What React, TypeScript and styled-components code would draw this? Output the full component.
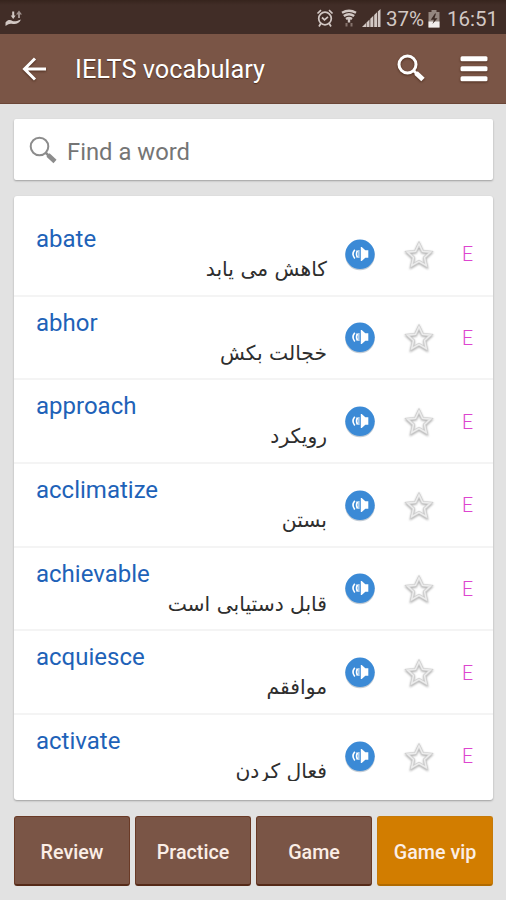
import styled, { createGlobalStyle } from 'styled-components';

const GlobalStyle = createGlobalStyle`
  * {
    box-sizing: border-box;
  }

  body {
    margin: 0;
    background-color: #e2e2e2;
    font-family: Roboto, 'DejaVu Sans', sans-serif;
  }

  svg {
    display: block;
    flex-shrink: 0;
  }
`

const Screen = styled.div`
  display: flex;
  flex-direction: column;
  width: 506px;
  height: 900px;
  overflow: hidden;
  background-color: #e2e2e2;
`

const StatusBar = styled.div`
  display: flex;
  justify-content: space-between;
  align-items: center;
  height: 34px;
  padding: 3px 9px 0 4px;
  background: linear-gradient(#36241d, #412d27 5px);
  color: #d2c8c4;
`

const StatusIcons = styled.div`
  display: flex;
  align-items: center;
`

const Gap = styled.div<{ $width: number }>`
  width: ${({ $width }) => $width}px;
`

const StatusText = styled.span<{ $width: number; $left: number }>`
  width: ${({ $width }) => $width}px;
  margin-left: ${({ $left }) => $left}px;
  font-size: 20.5px;
  line-height: 30px;
  white-space: nowrap;
`

const AppBar = styled.header`
  display: flex;
  align-items: center;
  height: 70px;
  padding: 0 18px 0 22px;
  background-color: #7a5546;
  border-bottom: 1px solid #6b4637;
  color: #ffffff;

  svg {
    filter: drop-shadow(0 1px 1px rgba(50, 20, 5, 0.6));
  }
`

const Title = styled.h1`
  flex: 1;
  margin: 3px 0 0 28px;
  font-size: 25.3px;
  font-weight: 400;
  line-height: 32px;
  text-shadow: 0 1px 1px rgba(50, 20, 5, 0.6);
`

const SearchButton = styled.div`
  margin-bottom: 2px;
`

const MenuButton = styled.div`
  margin: 1px 0 0 35px;
`

const SearchBox = styled.div`
  display: flex;
  align-items: center;
  height: 61px;
  margin: 15px 13px 0 14px;
  padding: 1px 14px 0 15px;
  background-color: #ffffff;
  border-radius: 2px;
  box-shadow: 0 1px 2px rgba(0, 0, 0, 0.3);
  color: #757575;
  font-size: 23.8px;
`

const Placeholder = styled.span`
  margin: 3px 0 0 10px;
`

const ListCard = styled.div`
  height: 604px;
  margin: 16px 13px 0 14px;
  padding: 17px 0 19px;
  background-color: #ffffff;
  border-radius: 3px;
  box-shadow: 0 1px 2px rgba(0, 0, 0, 0.3);
`

const List = styled.div`
  height: 568px;
  overflow: hidden;
`

const Row = styled.div`
  display: flex;
  align-items: center;
  height: 83.65px;
  padding-right: 20px;
  border-bottom: 2px solid #f4f4f4;
`

const Texts = styled.div`
  display: flex;
  flex-direction: column;
  width: 313px;
  height: 100%;
  padding: 10px 0 0 22px;
`

const Word = styled.span`
  color: #1e62b8;
  font-size: 24px;
  line-height: 32px;
`

const Translation = styled.span`
  color: #2e2e2e;
  font-family: 'DejaVu Sans', sans-serif;
  font-size: 20.3px;
  line-height: 28px;
  white-space: nowrap;
`

const SpeakButton = styled.div`
  margin-left: 17px;
`

const StarButton = styled.div`
  margin: 2px 0 0 27px;

  svg {
    filter: drop-shadow(0 1px 1px rgba(0, 0, 0, 0.35));
  }
`

const Badge = styled.span`
  margin: 3px 0 0 auto;
  color: #dd45cf;
  font-size: 19.5px;
  line-height: 24px;
  font-weight: 300;
`

const Actions = styled.div`
  display: grid;
  grid-template-columns: repeat(4, 1fr);
  gap: 5px;
  margin: 16px 13px 0 14px;
`

const ActionButton = styled.button<{ $vip?: boolean }>`
  height: 70px;
  padding: 3px 0 0;
  border: 1px solid ${({ $vip }) => ($vip ? '#c67a08' : '#6a3a26')};
  border-bottom: 2px solid ${({ $vip }) => ($vip ? '#b06a00' : '#552a18')};
  border-radius: 3px;
  background-color: ${({ $vip }) => ($vip ? '#d27d00' : '#7a5546')};
  color: #fbeee6;
  font-family: Roboto, sans-serif;
  font-size: 19.7px;
  font-weight: 500;
  white-space: nowrap;
`

const words = [
  { word: 'abate', translation: 'کاهش می یابد' },
  { word: 'abhor', translation: 'خجالت بکش' },
  { word: 'approach', translation: 'رویکرد' },
  { word: 'acclimatize', translation: 'بستن' },
  { word: 'achievable', translation: 'قابل دستیابی است' },
  { word: 'acquiesce', translation: 'موافقم' },
  { word: 'activate', translation: 'فعال کردن' },
]

const ShareIcon = () => (
  <svg width="20" height="20" viewBox="0 0 20 20" fill="#d2c8c4">
    <path d="M1.500 13.500c3-3.500 5-2.500 7-1.500 2 .8 4 .3 8.500-1.500-2 4-5 5-8 4.500-3-.7-4-.5-7.500 2z" />
    <path d="M8.200 2.500h2v4h1.500l-2.500 3.500-2.500-3.500h1.500z" />
    <path d="M14 9V5.500h-2L15 1.500l3 4h-2V9z" opacity="0.65" />
  </svg>
)

const AlarmIcon = () => (
  <svg width="18" height="20" viewBox="0 0 18 20" fill="none" stroke="#d2c8c4" strokeWidth="1.700">
    <circle cx="9" cy="9.500" r="6.300" />
    <path d="M1.500 4.500 5 1.200M16.500 4.500 13 1.200M4.800 14.500 3 17.500M13.200 14.500 15 17.500M6 8.500l2.500 2.300 3.500-3" />
  </svg>
)

const WifiIcon = () => (
  <svg width="16" height="20" viewBox="0 0 16 20" fill="none" stroke="#d2c8c4" strokeWidth="2.400">
    <path d="M1 3.800q7-4 14 0M2.800 7q5.200-3.500 10.400 0M5 10q3-2 6 0" />
    <path d="M8 10v3.500" />
    <path d="M5.500 14v3.500M10.500 14v3.500" stroke="#85736c" strokeWidth="2" />
  </svg>
)

const SignalIcon = () => (
  <svg width="19" height="19" viewBox="0 0 19 19" fill="#d2c8c4">
    <path d="M0 18l4-4v4zM4.500 13.500l3-3V18h-3zM8.300 9.700l3-3V18h-3zM12.200 6l2.800-2.800V18h-2.800zM15.800 2.500 18.500 0v18h-2.700z" />
  </svg>
)

const BatteryIcon = () => (
  <svg width="12" height="18" viewBox="0 0 12 18">
    <path d="M3.500 0h5v2H11.500v15.500h-11V2h3z" fill="#93867f" />
    <path d="M.5 11.500h11v6H.5z" fill="#f1eeec" />
    <path d="M7 3.500 2.800 9.800H6L4.500 14l5-5.700H6.500L8 3.500z" fill="#3b2a24" />
  </svg>
)

const BackIcon = () => (
  <svg width="25" height="24" viewBox="0 0 25 24" fill="none" stroke="currentColor" strokeWidth="3">
    <path d="M24 12H3M13 1.500 2.500 12 13 22.500" />
  </svg>
)

const SearchIcon = ({ thin }: { thin?: boolean }) => (
  <svg width="28" height="28" viewBox="0 0 28 28" fill="none" stroke={thin ? '#8c8c8c' : '#ffffff'}>
    <circle cx="10.500" cy="10.500" r={thin ? 8.800 : 8.500} strokeWidth={thin ? 2 : 3} />
    <path d="M16.500 16.500 20 20" strokeWidth={thin ? 2.500 : 3} />
    <path d="M19 19l7 6.500" strokeWidth={thin ? 4.500 : 5} />
  </svg>
)

const MenuIcon = () => (
  <svg width="28" height="26" viewBox="0 0 28 26" fill="currentColor">
    <rect x="0.500" y="0.300" width="27" height="5" rx="1.500" />
    <rect x="0.500" y="10.300" width="27" height="5" rx="1.500" />
    <rect x="0.500" y="20.300" width="27" height="5" rx="1.500" />
  </svg>
)

const SpeakerIcon = () => (
  <svg width="32" height="34" viewBox="0 0 32 34">
    <circle cx="16" cy="18.500" r="14.800" fill="#a9b6c4" opacity="0.7" />
    <circle cx="16" cy="17.300" r="14.700" fill="#3b8ad6" />
    <path d="M16.800 10h1l3.500 3.300h3v7.400h-3l-3.500 3.400h-1z" fill="#ffffff" />
    <path d="M10.800 12.800q-3.600 4.300 0 8.600M13.500 13.500q-2 3.600 0 7.200" fill="none" stroke="#ffffff" strokeWidth="1.600" />
    <path d="M14.900 13v8" stroke="#ffffff" strokeWidth="1" />
  </svg>
)

const StarIcon = () => (
  <svg width="32" height="32" viewBox="0 0 32 32" fill="none" strokeLinejoin="miter">
    <path d="M16 4.800l3.500 7.500 8 .800-6 5.500 1.800 8-7.300-4.300-7.300 4.300 1.800-8-6-5.500 8-.8z" stroke="#d0d0d0" strokeWidth="2.800" />
    <path d="M16 4.800l3.500 7.500 8 .800-6 5.500 1.800 8-7.300-4.300-7.300 4.300 1.800-8-6-5.500 8-.8z" stroke="#ececec" strokeWidth="1.400" />
  </svg>
)

const WordRow = ({ word, translation }: { word: string, translation: string }) => {
  return (
    <Row>
      <Texts>
        <Word>{word}</Word>
        <Translation dir="rtl" lang="fa">{translation}</Translation>
      </Texts>
      <SpeakButton>
        <SpeakerIcon />
      </SpeakButton>
      <StarButton>
        <StarIcon />
      </StarButton>
      <Badge>E</Badge>
    </Row>
  )
}

const App = () => {
  return (
    <Screen>
      <GlobalStyle />
      <StatusBar>
        <ShareIcon />
        <StatusIcons>
          <AlarmIcon />
          <Gap $width={7} />
          <WifiIcon />
          <Gap $width={5} />
          <SignalIcon />
          <StatusText $width={42} $left={5}>37%</StatusText>
          <BatteryIcon />
          <StatusText $width={50} $left={7}>16:51</StatusText>
        </StatusIcons>
      </StatusBar>
      <AppBar>
        <BackIcon />
        <Title>IELTS vocabulary</Title>
        <SearchButton>
          <SearchIcon />
        </SearchButton>
        <MenuButton>
          <MenuIcon />
        </MenuButton>
      </AppBar>
      <SearchBox>
        <SearchIcon thin />
        <Placeholder>Find a word</Placeholder>
      </SearchBox>
      <ListCard>
        <List>
          {words.map((item) => (
            <WordRow key={item.word} {...item} />
          ))}
        </List>
      </ListCard>
      <Actions>
        <ActionButton>Review</ActionButton>
        <ActionButton>Practice</ActionButton>
        <ActionButton>Game</ActionButton>
        <ActionButton $vip>Game vip</ActionButton>
      </Actions>
    </Screen>
  )
}

export default App
